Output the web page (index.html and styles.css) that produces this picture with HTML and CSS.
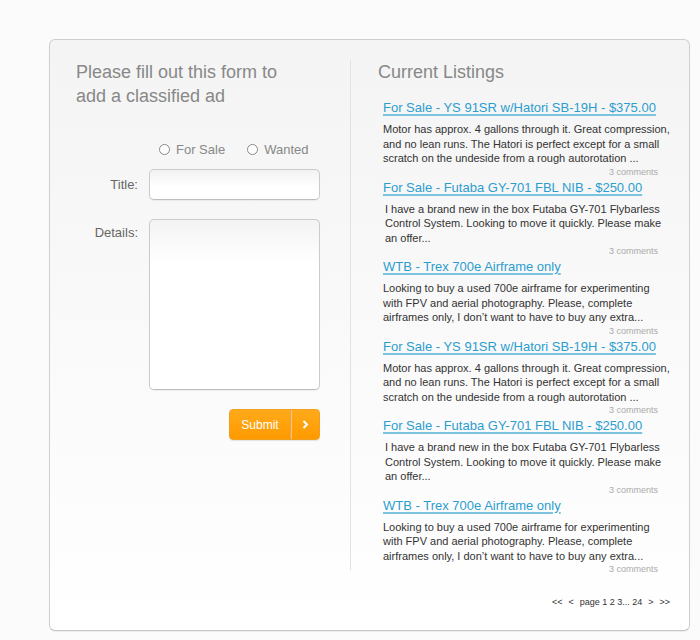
FILE: index.html
```html
<!DOCTYPE html>
<html>
<head>
<meta charset="utf-8">
<link rel="stylesheet" href="styles.css">
</head>
<body>
<div class="card">
  <div class="cols">
    <div class="left">
      <h2 class="heading">Please fill out this form to<br>add a classified ad</h2>
      <form class="form">
        <div class="radios">
          <label class="radio"><span class="dot"></span>For Sale</label>
          <label class="radio"><span class="dot"></span>Wanted</label>
        </div>
        <label class="lbl lbl-title">Title:</label>
        <div class="input"></div>
        <label class="lbl lbl-details">Details:</label>
        <div class="textarea"></div>
        <div class="actions">
          <div class="btn"><span class="btn-text">Submit</span><span class="btn-arrow"><svg width="7" height="9" viewBox="0 0 7 9"><path d="M1.5 1 L5 4.5 L1.5 8" fill="none" stroke="#fff" stroke-width="2"/></svg></span></div>
        </div>
      </form>
    </div>
    <div class="right">
      <h2 class="heading">Current Listings</h2>
      <ul class="list">
        <li class="item">
          <a class="title" href="#">For Sale - YS 91SR w/Hatori SB-19H - $375.00</a>
          <p class="desc">Motor has approx. 4 gallons through it. Great compression, and no lean runs. The Hatori is perfect except for a small scratch on the undeside from a rough autorotation ...</p>
          <div class="comments">3 comments</div>
        </li>
        <li class="item">
          <a class="title" href="#">For Sale - Futaba GY-701 FBL NIB - $250.00</a>
          <p class="desc ind">I have a brand new in the box Futaba GY-701 Flybarless Control System. Looking to move it quickly. Please make an offer...</p>
          <div class="comments">3 comments</div>
        </li>
        <li class="item">
          <a class="title" href="#">WTB - Trex 700e Airframe only</a>
          <p class="desc">Looking to buy a used 700e airframe for experimenting with FPV and aerial photography. Please, complete airframes only, I don’t want to have to buy any extra...</p>
          <div class="comments">3 comments</div>
        </li>
        <li class="item">
          <a class="title" href="#">For Sale - YS 91SR w/Hatori SB-19H - $375.00</a>
          <p class="desc">Motor has approx. 4 gallons through it. Great compression, and no lean runs. The Hatori is perfect except for a small scratch on the undeside from a rough autorotation ...</p>
          <div class="comments">3 comments</div>
        </li>
        <li class="item">
          <a class="title" href="#">For Sale - Futaba GY-701 FBL NIB - $250.00</a>
          <p class="desc ind">I have a brand new in the box Futaba GY-701 Flybarless Control System. Looking to move it quickly. Please make an offer...</p>
          <div class="comments">3 comments</div>
        </li>
        <li class="item">
          <a class="title" href="#">WTB - Trex 700e Airframe only</a>
          <p class="desc">Looking to buy a used 700e airframe for experimenting with FPV and aerial photography. Please, complete airframes only, I don’t want to have to buy any extra...</p>
          <div class="comments">3 comments</div>
        </li>
      </ul>
    </div>
  </div>
  <div class="pager">
    <span>&lt;&lt;</span><span>&lt;</span><span>page 1 2 3... 24</span><span>&gt;</span><span>&gt;&gt;</span>
  </div>
</div>
</body>
</html>
```

FILE: styles.css
```css
html, body {
  margin: 0;
  padding: 0;
}
body {
  background: #fbfbfb;
  font-family: "Liberation Sans", Arial, sans-serif;
  width: 700px;
  height: 640px;
  overflow: hidden;
}
.card {
  margin: 39px 0 0 49px;
  width: 639px;
  height: 590px;
  border: 1px solid #cfcfcf;
  border-bottom-color: #c4c4c4;
  border-radius: 6px;
  background: linear-gradient(#f4f4f4, #ffffff);
  box-shadow: 0 1px 1px rgba(0,0,0,0.06);
  display: flex;
  flex-direction: column;
}
.cols {
  display: flex;
  padding-top: 20px;
}
.left {
  width: 300px;
  box-sizing: border-box;
  padding-left: 26px;
}
.right {
  width: 339px;
  box-sizing: border-box;
  border-left: 1px solid #e2e2e2;
  padding-left: 27px;
  height: 510px;
}
.heading {
  margin: 0;
  font-weight: normal;
  font-size: 18px;
  line-height: 24px;
  color: #888;
}
.form {
  display: grid;
  grid-template-columns: 62px 171px;
  column-gap: 11px;
  margin-top: 33px;
}
.radios {
  grid-column: 2;
  display: flex;
  padding-left: 10px;
  height: 16px;
  align-items: center;
  margin-bottom: 12px;
  white-space: nowrap;
}
.radio {
  display: flex;
  align-items: center;
  font-size: 13px;
  color: #888;
  margin-right: 22px;
  white-space: nowrap;
}
.dot {
  width: 9px;
  height: 9px;
  border: 1px solid #888;
  border-radius: 50%;
  background: #fff;
  margin-right: 6px;
  flex: none;
}
.lbl {
  grid-column: 1;
  text-align: right;
  font-size: 13px;
  color: #666;
}
.lbl-title {
  line-height: 31px;
}
.lbl-details {
  padding-top: 6px;
  line-height: 16px;
  margin-top: 19px;
}
.input, .textarea {
  grid-column: 2;
  box-sizing: border-box;
  border: 1px solid #cbcbcb;
  border-bottom-color: #bdbdbd;
  border-radius: 5px;
  background: linear-gradient(#f2f2f2, #ffffff 60%);
  box-shadow: 0 1px 1px rgba(0,0,0,0.05);
}
.input {
  height: 31px;
}
.textarea {
  height: 171px;
  margin-top: 19px;
  background: linear-gradient(#f3f3f3, #ffffff 25%);
}
.actions {
  grid-column: 2;
  display: flex;
  justify-content: flex-end;
  margin-top: 19px;
}
.btn {
  display: flex;
  width: 91px;
  height: 31px;
  box-sizing: border-box;
  border: 1px solid #f0a020;
  border-radius: 4px;
  background: linear-gradient(#ffaa1a, #ff9a00);
  color: #fff;
  box-shadow: 0 1px 1px rgba(0,0,0,0.1);
}
.btn-text {
  width: 60px;
  display: flex;
  align-items: center;
  justify-content: center;
  font-size: 12px;
  border-right: 1px solid #e8a44a;
}
.btn-arrow {
  flex: 1;
  display: flex;
  align-items: center;
  justify-content: center;
  border-left: 1px solid #ffc46a;
}
.list {
  list-style: none;
  margin: 16px 0 0;
  padding: 0 0 0 5px;
}
.item {
  width: 288px;
  margin-bottom: 2px;
}
.title {
  display: block;
  width: fit-content;
  font-size: 13px;
  line-height: 16px;
  color: #2c9dcf;
  text-decoration: underline;
  text-decoration-color: #7cc3df;
  text-decoration-thickness: 2px;
  text-underline-offset: 2px;
  white-space: nowrap;
}
.desc {
  margin: 6px 0 0;
  font-size: 11px;
  line-height: 14.5px;
  color: #333;
}
.ind {
  padding-left: 2px;
}
.comments {
  text-align: right;
  padding-right: 13px;
  font-size: 9px;
  line-height: 12px;
  color: #aaa;
}
.pager {
  display: flex;
  justify-content: flex-end;
  gap: 6px;
  padding-right: 19px;
  margin-top: 26px;
  font-size: 9px;
  line-height: 12px;
  color: #333;
}
```
